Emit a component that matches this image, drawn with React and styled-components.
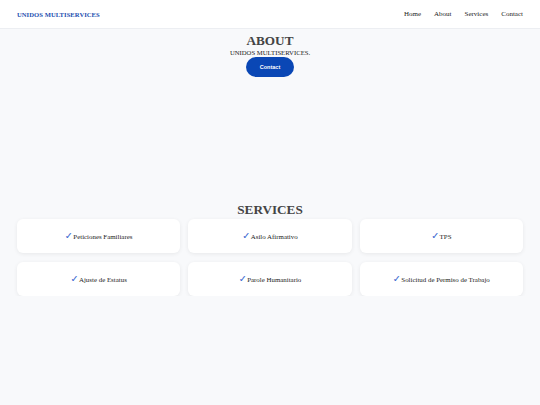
import React from 'react'
import styled, { createGlobalStyle } from "styled-components"

const GlobalStyle = createGlobalStyle`
    * { box-sizing: border-box; }
    body {
        margin: 0;
        background: #f8f9fb;
        font-family: "Liberation Serif", "Times New Roman", serif;
        color: #222;
    }
`;

const Header = styled.header`
    height: 29px;
    padding: 0 17px;
    background: #fff;
    border-bottom: 1px solid #eceef2;
    display: flex;
    justify-content: space-between;
    align-items: center;
`;

const Logo = styled.div`
    font-weight: 700;
    font-size: 6.6px;
    color: #2450b0;
    letter-spacing: 0.05px;
`;

const Nav = styled.nav`
    display: flex;
    gap: 13px;
`;

const NavLink = styled.a`
    font-size: 7px;
    color: #222;
    text-decoration: none;
`;

const AboutSection = styled.section`
    height: 173px;
    padding-top: 4px;
    display: flex;
    flex-direction: column;
    align-items: center;
`;

const Title = styled.h2`
    margin: 0;
    font-size: 13.2px;
    line-height: 15px;
    font-weight: 700;
    color: #444;
`;

const Subtitle = styled.p`
    margin: 0;
    font-size: 6.7px;
    line-height: 9px;
    color: #222;
`;

const ContactButton = styled.button`
    width: 48px;
    height: 20px;
    border: none;
    border-radius: 10px;
    background: #0a47b5;
    color: #fff;
    font-family: "Liberation Sans", Arial, sans-serif;
    font-weight: 700;
    font-size: 5.5px;
`;

const ServicesSection = styled.section`
    padding: 0 17px;
    display: flex;
    flex-direction: column;
    align-items: center;
`;

const Grid = styled.div`
    width: 100%;
    margin-top: 2px;
    display: grid;
    grid-template-columns: repeat(3, 1fr);
    gap: 9px 8px;
`;

const Card = styled.div`
    height: 34px;
    background: #fff;
    border-radius: 6px;
    box-shadow: 0 1px 4px rgba(0, 0, 0, 0.07);
    display: flex;
    justify-content: center;
    align-items: center;
`;

const Label = styled.span`
    font-size: 6.9px;
    line-height: 10px;
    color: #222;
`;

const Check = styled.span`
    color: #3a68d0;
    font-family: "DejaVu Sans", sans-serif;
    font-size: 9.5px;
    margin-right: 0.5px;
`;

const services = [
    "Peticiones Familiares",
    "Asilo Afirmativo",
    "TPS",
    "Ajuste de Estatus",
    "Parole Humanitario",
    "Solicitud de Permiso de Trabajo",
];

function App(){
    return (
        <>
            <GlobalStyle />
            <Header>
                <Logo>UNIDOS MULTISERVICES</Logo>
                <Nav>
                    <NavLink href="#">Home</NavLink>
                    <NavLink href="#">About</NavLink>
                    <NavLink href="#">Services</NavLink>
                    <NavLink href="#">Contact</NavLink>
                </Nav>
            </Header>
            <AboutSection>
                <Title>ABOUT</Title>
                <Subtitle>UNIDOS MULTISERVICES.</Subtitle>
                <ContactButton>Contact</ContactButton>
            </AboutSection>
            <ServicesSection>
                <Title>SERVICES</Title>
                <Grid>
                    {services.map((s) => (
                        <Card key={s}><Label><Check>✓</Check>{s}</Label></Card>
                    ))}
                </Grid>
            </ServicesSection>
        </>
    )
}

export default App
